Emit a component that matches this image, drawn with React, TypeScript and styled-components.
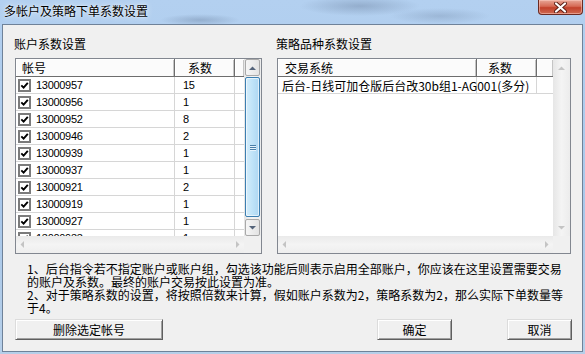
import React from 'react'
import styled, { createGlobalStyle } from 'styled-components'

const CJK = `"Noto Sans CJK SC", "Microsoft YaHei", sans-serif`
const NUM = `"Liberation Sans", "Noto Sans CJK SC", sans-serif`

const GlobalStyle = createGlobalStyle`
  html, body {
    margin: 0;
    padding: 0;
    background: #aecbec;
  }
  body {
    width: 585px;
    height: 354px;
    overflow: hidden;
  }
`

const Frame = styled.div`
  width: 585px;
  height: 354px;
  box-sizing: border-box;
  padding: 0 2px 2px 2px;
  display: flex;
  flex-direction: column;
  background:
    radial-gradient(ellipse 60px 10px at 360px 6px, rgba(90, 110, 140, 0.35), transparent),
    radial-gradient(ellipse 40px 6px at 200px 20px, rgba(80, 100, 130, 0.3), transparent),
    radial-gradient(ellipse 50px 8px at 440px 16px, rgba(90, 110, 140, 0.25), transparent),
    linear-gradient(180deg, #b3d0f0 0%, #a9c8ea 60%, #b6cfe9 100%);
`

const TitleBar = styled.div`
  height: 24px;
  display: flex;
  align-items: flex-start;
`

const Title = styled.div`
  font: 12px/16px ${CJK};
  color: #000;
  padding: 3px 0 0 2px;
  text-shadow: 0 0 6px rgba(255, 255, 255, 0.9), 0 0 2px rgba(255, 255, 255, 0.8);
`

const CloseButton = styled.div`
  margin-left: auto;
  margin-right: 0;
  width: 45px;
  height: 15px;
  box-sizing: border-box;
  border: 1px solid #6b2a22;
  border-top: none;
  border-radius: 0 0 4px 4px;
  background: linear-gradient(180deg, #e7a797 0%, #d66a55 45%, #c2412b 55%, #cf6a52 100%);
  box-shadow: inset 0 0 0 1px rgba(255, 210, 200, 0.5);
  display: flex;
  align-items: center;
  justify-content: center;
`

const Client = styled.div`
  flex: 1;
  box-sizing: border-box;
  border: 1px solid #6f8299;
  background: #f0f0f0;
  display: flex;
  flex-direction: column;
  padding: 11px 10px 0 12px;
`

const Panels = styled.div`
  display: flex;
  gap: 15px;
`

const Group = styled.div`
  display: flex;
  flex-direction: column;
  gap: 6px;
`

const GroupLabel = styled.div`
  font: 12px/16px ${CJK};
  color: #000;
  margin-left: -1px;
`

const ListBox = styled.div<{ $w: number }>`
  width: ${p => p.$w}px;
  height: 196px;
  box-sizing: border-box;
  border: 1px solid #828790;
  background: #fff;
  display: grid;
  grid-template-columns: 1fr 17px;
  grid-template-rows: 1fr 17px;
`

const Viewport = styled.div`
  overflow: hidden;
`

const HeaderRow = styled.div<{ $cols: string }>`
  display: grid;
  grid-template-columns: ${p => p.$cols};
  height: 18px;
`

const HeadCell = styled.div<{ $pad: number; $last?: boolean }>`
  box-sizing: border-box;
  background: #fbfbfb;
  border-bottom: 1px solid #6d6d6d;
  border-right: ${p => (p.$last ? 'none' : '1px solid #6d6d6d')};
  box-shadow: inset 1px 1px 0 #fff, inset -1px 0 0 #c4c4c4;
  padding-left: ${p => p.$pad}px;
  font: 12px/17px ${CJK};
  color: #000;
  white-space: nowrap;
`

const Row = styled.div<{ $cols: string }>`
  display: grid;
  grid-template-columns: ${p => p.$cols};
  height: 17px;
  box-sizing: border-box;
  border-bottom: 1px solid #d6d6d6;
`

const Cell = styled.div<{ $pad: number; $cjk?: boolean }>`
  box-sizing: border-box;
  border-right: 1px solid #d6d6d6;
  padding-left: ${p => p.$pad}px;
  display: flex;
  align-items: center;
  gap: 5px;
  white-space: nowrap;
  overflow: visible;
  font: ${p => (p.$cjk ? `12px ${CJK}` : `11px ${NUM}`)};
  letter-spacing: ${p => (p.$cjk ? '0' : '-0.3px')};
  color: #000;
`

const FillCell = styled.div``

const Check = styled.div`
  width: 13px;
  height: 13px;
  box-sizing: border-box;
  border: 2px solid #7b7b7b;
  background: #fff;
  flex: none;
  display: flex;
  align-items: center;
  justify-content: center;
`

const VScroll = styled.div`
  display: flex;
  flex-direction: column;
  background: linear-gradient(90deg, #e6e6e6, #f4f4f4 50%, #ececec);
`

const HScroll = styled.div`
  display: flex;
  align-items: center;
  justify-content: space-between;
  padding: 0 4px;
  background: linear-gradient(180deg, #eaeaea, #f4f4f4 50%, #eeeeee);
`

const Corner = styled.div`
  background: #f0f0f0;
`

const ScrollButton = styled.div<{ $active?: boolean }>`
  height: 17px;
  box-sizing: border-box;
  margin: 0 1px;
  flex: none;
  display: flex;
  align-items: center;
  justify-content: center;
  border-radius: 2px;
  border: 1px solid ${p => (p.$active ? '#a9a9a9' : 'transparent')};
  background: ${p => (p.$active ? 'linear-gradient(90deg, #f6f6f6, #e3e3e3)' : 'transparent')};
`

const Thumb = styled.div<{ $h: number }>`
  height: ${p => p.$h}px;
  margin: 1px 1px;
  box-sizing: border-box;
  border: 1px solid #3c7fb1;
  border-radius: 2px;
  background: linear-gradient(90deg, #d4edfb, #bfe3f8 50%, #aed7f2);
  box-shadow: inset 0 0 0 1px rgba(255, 255, 255, 0.6);
  display: flex;
  flex-direction: column;
  align-items: center;
  justify-content: center;
  gap: 1px;
`

const Grip = styled.div`
  width: 6px;
  height: 1px;
  background: #4a7fa8;
  box-shadow: 0 1px 0 #e6f4fd;
`

const TrackFill = styled.div`
  flex: 1;
`

const Notes = styled.p`
  margin: 8px 0 0 12px;
  font: 12px/13px ${CJK};
  color: #000;
  white-space: nowrap;
`

const ButtonRow = styled.div`
  margin-top: 5px;
  display: flex;
  align-items: center;
  padding-right: 0;
`

const PushButton = styled.button<{ $w: number }>`
  width: ${p => p.$w}px;
  height: 21px;
  box-sizing: border-box;
  padding: 0;
  border: 1px solid;
  border-color: #dcdcdc #5f5f5f #5f5f5f #dcdcdc;
  box-shadow: inset 1px 1px 0 #fff, inset -1px -1px 0 #a0a0a0;
  background: #f0f0f0;
  font: 12px/17px ${CJK};
  color: #000;
  cursor: default;
`

const Spacer = styled.div`
  flex: 1;
`

type Dir = 'up' | 'down' | 'left' | 'right'

const Arrow = ({ dir, color }: { dir: Dir; color: string }) => {
  const pts: Record<Dir, string> = {
    up: '0,4 3.5,0.5 7,4',
    down: '0,0 3.5,3.5 7,0',
    left: '4,0 0.5,3.5 4,7',
    right: '0,0 3.5,3.5 0,7',
  }
  const vertical = dir === 'up' || dir === 'down'
  return (
    <svg width={vertical ? 7 : 4} height={vertical ? 4 : 7} viewBox={vertical ? '0 0 7 4' : '0 0 4 7'}>
      <polygon points={pts[dir]} fill={color} />
    </svg>
  )
}

const CheckMark = () => (
  <svg width="9" height="9" viewBox="0 0 9 9">
    <polyline points="1.3,4.3 3.6,6.6 7.8,1.8" fill="none" stroke="#000" strokeWidth="1.9" />
  </svg>
)

const accounts = [
  ['13000957', '15'],
  ['13000956', '1'],
  ['13000952', '8'],
  ['13000946', '2'],
  ['13000939', '1'],
  ['13000937', '1'],
  ['13000921', '2'],
  ['13000919', '1'],
  ['13000927', '1'],
  ['13000933', '1'],
]

const LEFT_COLS = '159px 60px 1fr'
const RIGHT_COLS = '199px 60px 1fr'

export default function App() {
  return (
    <>
      <GlobalStyle />
      <Frame>
        <TitleBar>
          <Title>多帐户及策略下单系数设置</Title>
          <CloseButton>
            <svg width="13" height="11" viewBox="0 0 13 11">
              <path d="M2 1.5 L11 9.5 M11 1.5 L2 9.5" stroke="#5a1d14" strokeWidth="4" strokeLinecap="round" />
              <path d="M2 1.5 L11 9.5 M11 1.5 L2 9.5" stroke="#fff" strokeWidth="2.2" strokeLinecap="round" />
            </svg>
          </CloseButton>
        </TitleBar>

        <Client>
          <Panels>
            <Group>
              <GroupLabel>账户系数设置</GroupLabel>
              <ListBox $w={247}>
                <Viewport>
                  <HeaderRow $cols={LEFT_COLS}>
                    <HeadCell $pad={6}>帐号</HeadCell>
                    <HeadCell $pad={13}>系数</HeadCell>
                    <HeadCell $pad={0} $last />
                  </HeaderRow>
                  {accounts.map(([id, k]) => (
                    <Row key={id} $cols={LEFT_COLS}>
                      <Cell $pad={2}>
                        <Check>
                          <CheckMark />
                        </Check>
                        {id}
                      </Cell>
                      <Cell $pad={8}>{k}</Cell>
                      <FillCell />
                    </Row>
                  ))}
                </Viewport>
                <VScroll>
                  <ScrollButton $active>
                    <Arrow dir="up" color="#55647a" />
                  </ScrollButton>
                  <Thumb $h={140}>
                    <Grip />
                    <Grip />
                    <Grip />
                  </Thumb>
                  <TrackFill />
                  <ScrollButton $active>
                    <Arrow dir="down" color="#55647a" />
                  </ScrollButton>
                </VScroll>
                <HScroll>
                  <Arrow dir="left" color="#c4c4c4" />
                  <Arrow dir="right" color="#c4c4c4" />
                </HScroll>
                <Corner />
              </ListBox>
            </Group>

            <Group>
              <GroupLabel>策略品种系数设置</GroupLabel>
              <ListBox $w={294}>
                <Viewport>
                  <HeaderRow $cols={RIGHT_COLS}>
                    <HeadCell $pad={7}>交易系统</HeadCell>
                    <HeadCell $pad={11}>系数</HeadCell>
                    <HeadCell $pad={0} $last />
                  </HeaderRow>
                  <Row $cols={RIGHT_COLS}>
                    <Cell $pad={4} $cjk>后台-日线可加仓版后台改30b组1-AG001(多分)</Cell>
                    <Cell $pad={0} />
                    <FillCell />
                  </Row>
                </Viewport>
                <VScroll>
                  <ScrollButton>
                    <Arrow dir="up" color="#c4c4c4" />
                  </ScrollButton>
                  <TrackFill />
                  <ScrollButton>
                    <Arrow dir="down" color="#c4c4c4" />
                  </ScrollButton>
                </VScroll>
                <HScroll>
                  <Arrow dir="left" color="#c4c4c4" />
                  <Arrow dir="right" color="#c4c4c4" />
                </HScroll>
                <Corner />
              </ListBox>
            </Group>
          </Panels>

          <Notes>
            1、后台指令若不指定账户或账户组，勾选该功能后则表示启用全部账户，你应该在这里设置需要交易
            <br />
            的账户及系数。最终的账户交易按此设置为准。
            <br />
            2、对于策略系数的设置，将按照倍数来计算，假如账户系数为2，策略系数为2，那么实际下单数量等
            <br />
            于4。
          </Notes>

          <ButtonRow>
            <PushButton $w={148}>删除选定帐号</PushButton>
            <Spacer />
            <PushButton $w={75}>确定</PushButton>
            <PushButton $w={65} style={{ marginLeft: 55 }}>取消</PushButton>
          </ButtonRow>
        </Client>
      </Frame>
    </>
  )
}
